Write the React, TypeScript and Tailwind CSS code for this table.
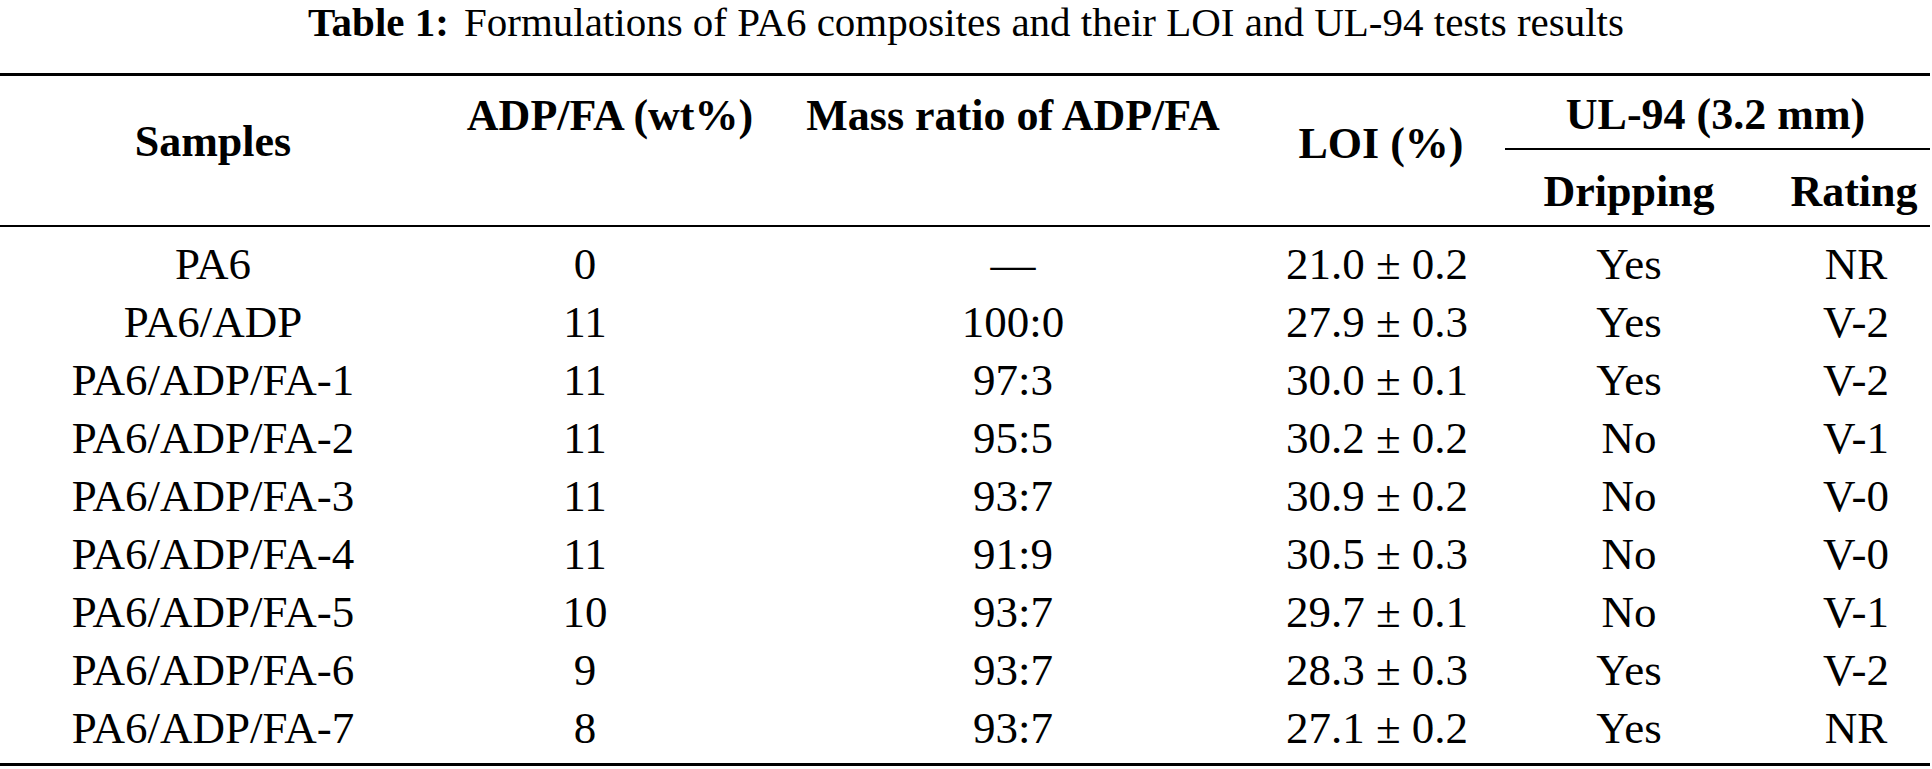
import React from "react";

type Row = {
  sample: string;
  wt: string;
  ratio: string;
  loi: string;
  dripping: string;
  rating: string;
};

const rows: Row[] = [
  { sample: "PA6", wt: "0", ratio: "—", loi: "21.0 ± 0.2", dripping: "Yes", rating: "NR" },
  { sample: "PA6/ADP", wt: "11", ratio: "100:0", loi: "27.9 ± 0.3", dripping: "Yes", rating: "V-2" },
  { sample: "PA6/ADP/FA-1", wt: "11", ratio: "97:3", loi: "30.0 ± 0.1", dripping: "Yes", rating: "V-2" },
  { sample: "PA6/ADP/FA-2", wt: "11", ratio: "95:5", loi: "30.2 ± 0.2", dripping: "No", rating: "V-1" },
  { sample: "PA6/ADP/FA-3", wt: "11", ratio: "93:7", loi: "30.9 ± 0.2", dripping: "No", rating: "V-0" },
  { sample: "PA6/ADP/FA-4", wt: "11", ratio: "91:9", loi: "30.5 ± 0.3", dripping: "No", rating: "V-0" },
  { sample: "PA6/ADP/FA-5", wt: "10", ratio: "93:7", loi: "29.7 ± 0.1", dripping: "No", rating: "V-1" },
  { sample: "PA6/ADP/FA-6", wt: "9", ratio: "93:7", loi: "28.3 ± 0.3", dripping: "Yes", rating: "V-2" },
  { sample: "PA6/ADP/FA-7", wt: "8", ratio: "93:7", loi: "27.1 ± 0.2", dripping: "Yes", rating: "NR" },
];

export default function App() {
  return (
    <div className="h-[769px] w-[1932px] overflow-hidden bg-white text-black font-['Liberation_Serif','Times_New_Roman',serif]">
      {/* caption */}
      <div className="flex h-[73px] justify-center text-[41px] leading-[44px]">
        <p>
          <span className="font-bold">Table 1:</span>
          <span className="ml-[15px]">Formulations of PA6 composites and their LOI and UL-94 tests results</span>
        </p>
      </div>

      <table className="w-[1930px] table-fixed border-collapse text-[45px] leading-[38px]">
        <colgroup>
          <col className="w-[426px]" />
          <col className="w-[338px]" />
          <col className="w-[498px]" />
          <col className="w-[230px]" />
          <col className="w-[274px]" />
          <col className="w-[164px]" />
        </colgroup>
        <thead>
          <tr className="border-t-[3px] border-black">
            <th rowSpan={2} className="border-b-2 border-black p-0 pb-[16px] text-center align-middle text-[44px] font-bold">
              Samples
            </th>
            <th className="h-[75px] p-0 pb-[15px] pl-[30px] text-center align-bottom text-[44px] font-bold">ADP/FA (wt%)</th>
            <th className="h-[75px] p-0 pb-[15px] text-center align-bottom text-[44px] font-bold">Mass ratio of ADP/FA</th>
            <th rowSpan={2} className="border-b-2 border-black p-0 pb-[12px] pl-[8px] text-center align-middle text-[44px] font-bold">
              LOI (%)
            </th>
            <th colSpan={2} className="h-[75px] p-0 align-bottom text-[44px] font-bold">
              <div className="ml-[13px] border-b-2 border-black pb-[14px] pr-[4px] text-center">UL-94 (3.2 mm)</div>
            </th>
          </tr>
          <tr className="border-b-2 border-black">
            <th className="p-0" />
            <th className="p-0" />
            <th className="h-[76px] p-0 pb-[14px] text-center align-bottom text-[44px] font-bold">Dripping</th>
            <th className="h-[76px] p-0 pb-[14px] pl-[12px] text-center align-bottom text-[44px] font-bold">Rating</th>
          </tr>
        </thead>
        <tbody className="font-normal">
          <tr className="h-[9px]">
            <td colSpan={6} className="p-0" />
          </tr>
          {rows.map((r) => (
            <tr key={r.sample} className="h-[58px]">
              <td className="p-0 text-center">{r.sample}</td>
              <td className="p-0 pr-[20px] text-center">{r.wt}</td>
              <td className="p-0 text-center">{r.ratio}</td>
              <td className="p-0 text-center">{r.loi}</td>
              <td className="p-0 text-center">{r.dripping}</td>
              <td className="p-0 pl-[16px] text-center">{r.rating}</td>
            </tr>
          ))}
          <tr className="h-[8px] border-b-[3px] border-black">
            <td colSpan={6} className="p-0" />
          </tr>
        </tbody>
      </table>
    </div>
  );
}
